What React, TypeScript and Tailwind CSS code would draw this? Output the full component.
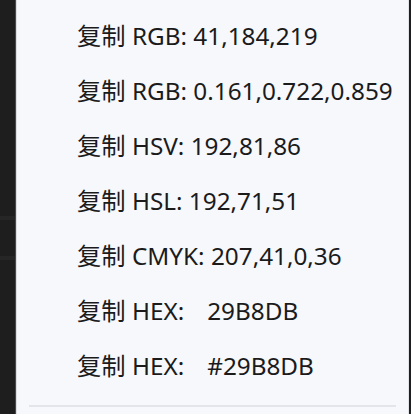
import React from 'react';

const items: [string, string][] = [
  ['RGB:', ' 41,184,219'],
  ['RGB:', ' 0.161,0.722,0.859'],
  ['HSV:', ' 192,81,86'],
  ['HSL:', ' 192,71,51'],
  ['CMYK:', ' 207,41,0,36'],
  ['HEX:', '29B8DB'],
  ['HEX:', '#29B8DB'],
];

export default function App() {
  return (
    <div className="flex h-[414px] w-[411px] overflow-hidden bg-[#1e1e1e]">
      {/* Editor strip behind the menu */}
      <div className="flex w-[15px] flex-col bg-[#1e1e1e]">
        <div className="h-[216px]" />
        <div className="h-[4px] bg-[#262626]" />
        <div className="h-[36px]" />
        <div className="h-[4px] bg-[#262626]" />
      </div>
      <div className="w-px bg-[#4a4a4a]" />
      <div className="w-px bg-[#dcdde0]" />

      {/* Context menu */}
      <div
        className="flex flex-1 flex-col bg-[#f7f8fc] pt-[9px] text-[#1b1b1b]"
        style={{ fontFamily: '"Noto Sans", "Noto Sans CJK SC", sans-serif' }}
      >
        {items.map(([label, value]) => (
          <div key={label + value} className="flex h-[55px] items-center whitespace-pre pl-[60px] text-[24.3px] leading-none">
            <span>复制 {label}</span>
            {label === 'HEX:' ? <span className="pl-[23px]">{value}</span> : <span>{value}</span>}
          </div>
        ))}
        <div className="mx-[12px] mt-[11px] h-[2px] bg-[#e4e5ea]" />
      </div>

      <div className="w-px bg-[#e2e3e8]" />
      <div className="w-[2px] bg-[#1e1e1e]" />
    </div>
  );
}
